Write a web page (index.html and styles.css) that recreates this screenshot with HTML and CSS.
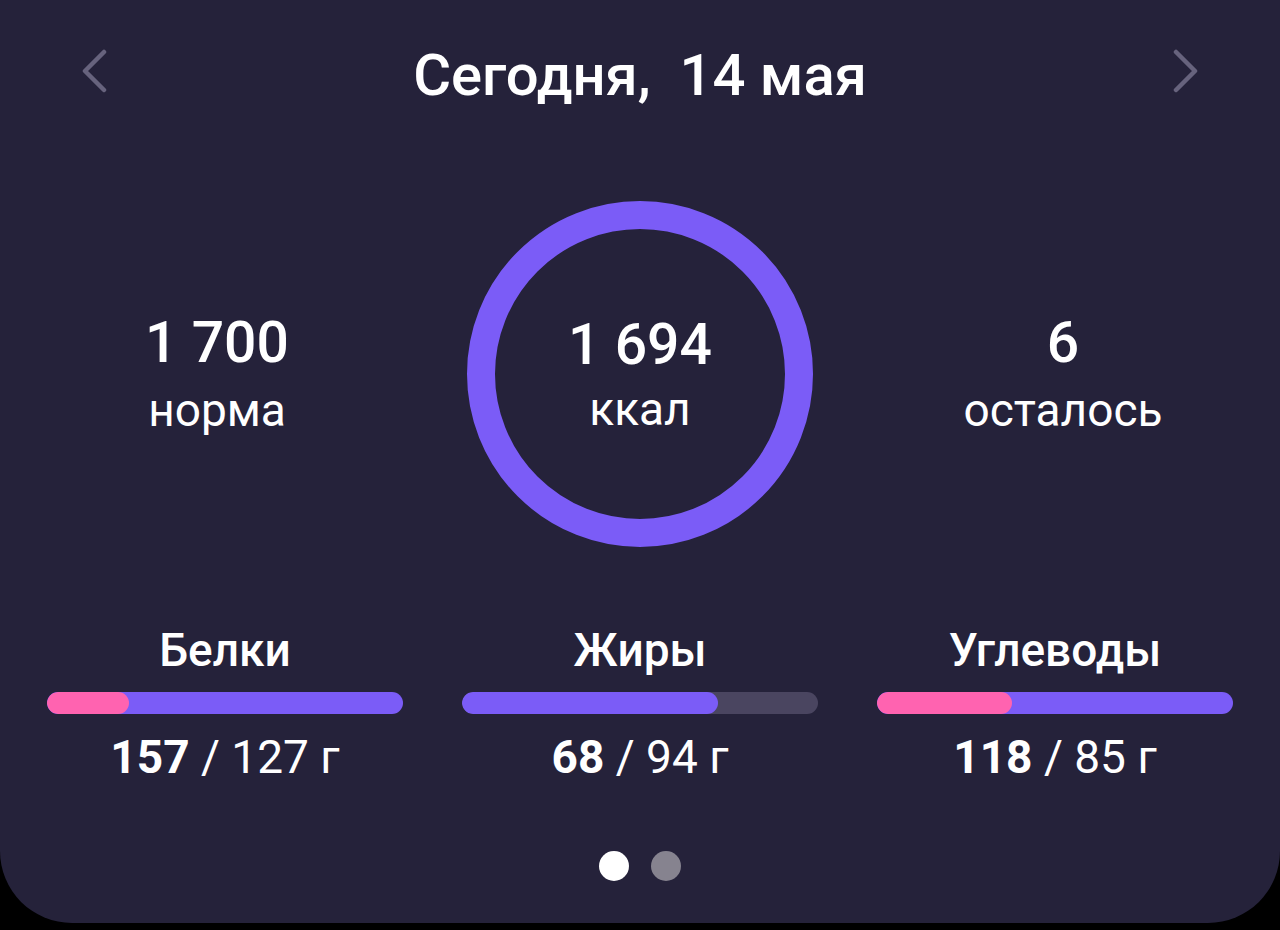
FILE: index.html
```html
<!DOCTYPE html>
<html lang="ru">

<head>
    <meta charset="UTF-8">
    <meta name="viewport" content="width=device-width, initial-scale=1.0">
    <link rel="stylesheet" href="styles.css">
</head>

<body>
    <div class="card">

        <div class="day-header">
            <svg class="arrow" width="30" height="44" viewBox="0 0 30 44">
                <path d="M23 3 L4 22 L23 41" />
            </svg>
            <div class="day-title">Сегодня,&nbsp; 14 мая</div>
            <svg class="arrow" width="30" height="44" viewBox="0 0 30 44">
                <path d="M7 3 L26 22 L7 41" />
            </svg>
        </div>

        <div class="summary">
            <div class="stat">
                <div class="stat-value">1 700</div>
                <div class="stat-label">норма</div>
            </div>

            <div class="ring">
                <svg width="346" height="346" viewBox="0 0 346 346">
                    <circle cx="173" cy="173" r="159" />
                </svg>
                <div class="ring-text">
                    <div class="stat-value">1 694</div>
                    <div class="stat-label">ккал</div>
                </div>
            </div>

            <div class="stat">
                <div class="stat-value">6</div>
                <div class="stat-label">осталось</div>
            </div>
        </div>

        <div class="macros">
            <div class="macro">
                <div class="macro-name">Белки</div>
                <div class="bar full">
                    <div class="bar-over" style="width: 23%"></div>
                </div>
                <div class="macro-amount"><b>157</b> / 127 г</div>
            </div>

            <div class="macro">
                <div class="macro-name">Жиры</div>
                <div class="bar">
                    <div class="bar-fill" style="width: 72%"></div>
                </div>
                <div class="macro-amount"><b>68</b> / 94 г</div>
            </div>

            <div class="macro">
                <div class="macro-name">Углеводы</div>
                <div class="bar full">
                    <div class="bar-over" style="width: 38%"></div>
                </div>
                <div class="macro-amount"><b>118</b> / 85 г</div>
            </div>
        </div>

        <div class="pager">
            <span class="dot active"></span>
            <span class="dot"></span>
        </div>
    </div>
</body>

</html>
```

FILE: styles.css
```css
body {
    margin: 0;
    background-color: #000;
    font-family: Roboto, "Noto Sans", sans-serif;
    color: #fff;
}

.card {
    width: 1280px;
    height: 923px;
    background-color: #25223a;
    border-radius: 0 0 72px 72px;
    display: flex;
    flex-direction: column;
}

.day-header {
    height: 142px;
    display: flex;
    align-items: center;
    justify-content: space-between;
    padding: 0 81px 0 81px;
}

.arrow path {
    fill: none;
    stroke: #67637d;
    stroke-width: 4.5;
    stroke-linecap: round;
    stroke-linejoin: round;
}

.day-title {
    font-size: 58px;
    font-weight: 500;
    padding-top: 8px;
}

.summary {
    display: grid;
    grid-template-columns: 1fr 346px 1fr;
    column-gap: 80px;
    align-items: center;
    padding: 0 47px;
    margin-top: 59px;
}

.stat,
.ring-text {
    text-align: center;
}

.stat-value {
    font-size: 57px;
    font-weight: 500;
    line-height: 66px;
}

.stat-label {
    font-size: 46px;
    line-height: 56px;
    margin-top: 6px;
}

.ring-text .stat-label {
    margin-top: 3px;
}

.ring {
    position: relative;
    width: 346px;
    height: 346px;
}

.ring svg {
    display: block;
}

.ring circle {
    fill: none;
    stroke: #7b5cf7;
    stroke-width: 28;
}

.ring-text {
    position: absolute;
    inset: 0;
    display: flex;
    flex-direction: column;
    justify-content: center;
}

.macros {
    display: grid;
    grid-template-columns: repeat(3, 356px);
    column-gap: 59px;
    padding: 0 47px;
    margin-top: 75px;
}

.macro {
    display: flex;
    flex-direction: column;
    align-items: center;
}

.macro-name {
    font-size: 46px;
    font-weight: 500;
    line-height: 56px;
}

.bar {
    width: 100%;
    height: 22px;
    margin-top: 14px;
    border-radius: 11px;
    background-color: #4a4560;
    overflow: hidden;
}

.bar.full {
    background-color: #7b5cf7;
}

.bar-fill,
.bar-over {
    height: 100%;
    border-radius: 11px;
}

.bar-fill {
    background-color: #7b5cf7;
}

.bar-over {
    background-color: #ff63b0;
}

.macro-amount {
    font-size: 46px;
    line-height: 56px;
    margin-top: 15px;
}

.macro-amount b {
    font-weight: 700;
}

.pager {
    display: flex;
    justify-content: center;
    gap: 22px;
    margin-top: 66px;
}

.dot {
    width: 30px;
    height: 30px;
    border-radius: 50%;
    background-color: #86838f;
}

.dot.active {
    background-color: #fff;
}
```
